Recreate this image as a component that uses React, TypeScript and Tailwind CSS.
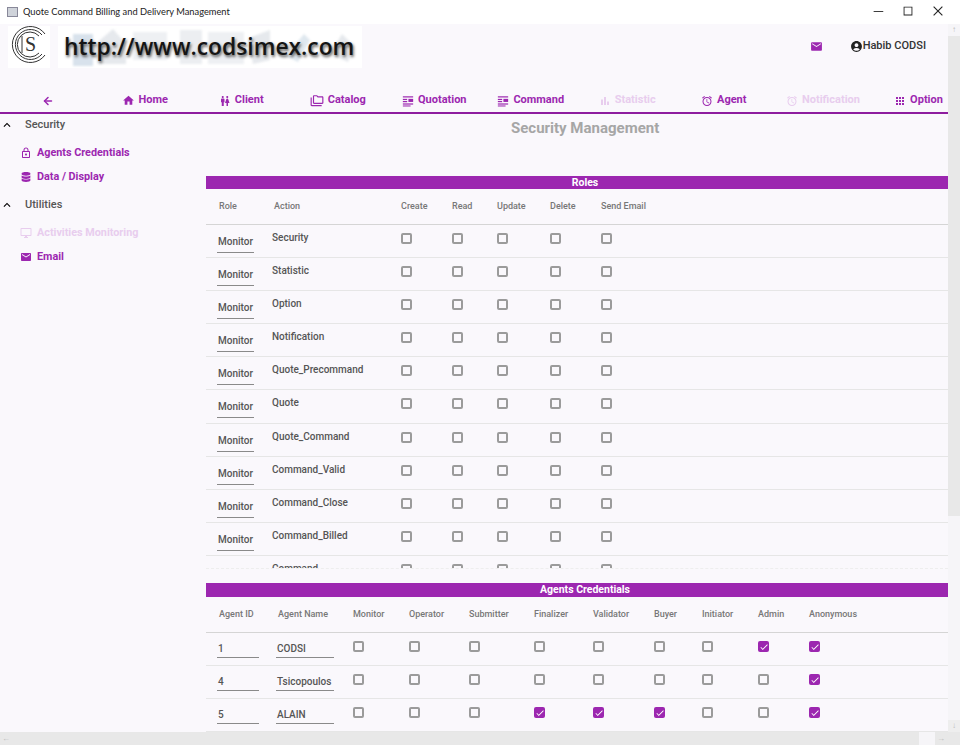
import React from 'react';
import {
  MdHome, MdWc, MdOutlineFolderCopy, MdOutlineBarChart, MdOutlineAlarm, MdApps, MdEmail,
  MdAccountCircle, MdOutlineLock, MdOutlineDesktopWindows, MdExpandLess, MdCheck,
} from 'react-icons/md';
import { FaDatabase } from 'react-icons/fa';
import { VscChromeMinimize, VscChromeMaximize, VscChromeClose } from 'react-icons/vsc';
import { ArrowLeft } from 'lucide-react';

const ListIcon = ({ className }: { className?: string }) => (
  <svg viewBox="0 0 14 14" className={className} fill="currentColor">
    <rect x="1" y="1.5" width="12" height="1.4" />
    <rect x="1" y="4.5" width="5" height="1.4" />
    <rect x="7.5" y="4.5" width="5.5" height="3.6" />
    <rect x="1" y="7" width="5" height="1.4" />
    <rect x="1" y="9.8" width="12" height="1.4" />
    <rect x="1" y="12.2" width="9" height="1.2" />
  </svg>
);

const navItems = [
  { icon: MdHome, label: 'Home', size: 'h-[13px] w-[13px]' },
  { icon: MdWc, label: 'Client', size: 'h-3 w-3' },
  { icon: MdOutlineFolderCopy, label: 'Catalog', size: 'h-[14px] w-[14px]' },
  { icon: ListIcon, label: 'Quotation', size: 'h-3 w-3' },
  { icon: ListIcon, label: 'Command', size: 'h-3 w-3' },
  { icon: MdOutlineBarChart, label: 'Statistic', size: 'h-3 w-3', off: true },
  { icon: MdOutlineAlarm, label: 'Agent', size: 'h-3 w-3' },
  { icon: MdOutlineAlarm, label: 'Notification', size: 'h-3 w-3', off: true },
  { icon: MdApps, label: 'Option', size: 'h-3 w-3' },
];

const roleActions = [
  'Security', 'Statistic', 'Option', 'Notification', 'Quote_Precommand', 'Quote',
  'Quote_Command', 'Command_Valid', 'Command_Close', 'Command_Billed', 'Command',
];

const agents = [
  { id: '1', name: 'CODSI', checks: [7, 8] },
  { id: '4', name: 'Tsicopoulos', checks: [8] },
  { id: '5', name: 'ALAIN', checks: [3, 4, 5, 8] },
];

const agentCols = ['Monitor', 'Operator', 'Submitter', 'Finalizer', 'Validator', 'Buyer', 'Initiator', 'Admin', 'Anonymous'];

const Box = ({ checked }: { checked?: boolean }) =>
  checked ? (
    <span className="flex h-[11px] w-[11px] items-center justify-center rounded-[2px] bg-[#9c27b0] text-white">
      <MdCheck size={10} />
    </span>
  ) : (
    <span className="block h-[11px] w-[11px] rounded-[2px] border-2 border-[#9b9b9b]" />
  );

const SideItem = ({ icon: Icon, label, off, size = 12 }: { icon: React.ElementType; label: string; off?: boolean; size?: number }) => (
  <div className={`flex h-6 items-center gap-[5px] pl-[20px] text-[10.8px] font-bold ${off ? 'text-[#e8cdee]' : 'text-[#9c27b0]'}`}>
    <span className="flex w-3 justify-center"><Icon size={size} /></span>
    <span>{label}</span>
  </div>
);

const SideHead = ({ label }: { label: string }) => (
  <div className="flex h-6 items-center text-[11px] font-medium text-[#555]">
    <MdExpandLess size={14} className="text-black" />
    <span className="ml-[11px]">{label}</span>
  </div>
);

const ROLE_GRID = 'grid grid-cols-[55px_127px_51px_45px_53px_51px_1fr]';
const AGENT_GRID = 'grid grid-cols-[59px_75px_56px_60px_65px_59px_61px_48px_56px_51px_1fr]';

export default function App() {
  return (
    <div className="flex h-[745px] w-[960px] flex-col overflow-hidden bg-[#faf8fc] font-[Roboto,sans-serif]">
      {/* window title bar */}
      <div className="flex h-6 shrink-0 items-center bg-white pl-[7px] font-[Lato,sans-serif] text-[9.3px] text-[#222]">
        <span className="mr-[5px] h-[10px] w-[11px] border border-[#889] bg-[#cfd3da]" />
        <span>Quote Command Billing and Delivery Management</span>
        <div className="ml-auto mb-[2px] flex items-center gap-[16px] pr-[15px] text-[#222]">
          <VscChromeMinimize size={14} />
          <VscChromeMaximize size={14} />
          <VscChromeClose size={14} />
        </div>
      </div>

      <div className="flex min-h-0 flex-1">
        <div className="flex min-w-0 flex-1 flex-col overflow-hidden">
          {/* logo row */}
          <div className="flex h-[65px] shrink-0 items-start">
            <div className="ml-[8px] mt-[2px] h-[42px] w-[42px] bg-white">
              <svg viewBox="0 0 42 42" className="h-[42px] w-[42px]" fill="none" stroke="#333" strokeWidth="1">
                <path d="M37 8 A18 18 0 1 0 37 29" />
                <path d="M34 9 A15 15 0 1 0 34 28" />
                <path d="M31 10 A12.5 12.5 0 1 0 31 27" />
                <path d="M14 10 v17" />
                <text x="17" y="25" fontFamily="Liberation Serif, serif" fontSize="20" fill="#333" stroke="none">S</text>
              </svg>
            </div>
            <div className="relative ml-[8px] mt-[2px] flex h-[42px] w-[304px] items-center overflow-hidden bg-white pl-[6px]">
              <svg viewBox="0 0 304 42" className="absolute inset-0 h-full w-full blur-[1px]" fill="#e6e9ed">
                <rect x="15" y="8" width="20" height="32" fill="#d8e2ec" />
                <path d="M35 20 L55 3 L68 18 L68 38 L40 38 Z" />
                <rect x="75" y="6" width="34" height="28" fill="#eef0f3" />
                <rect x="122" y="4" width="22" height="34" fill="#eceef1" />
                <rect x="150" y="6" width="36" height="32" fill="#eef0f3" />
                <path d="M190 12 L212 4 L212 34 L195 38 Z" />
                <path d="M228 30 L246 8 L252 14 L240 36 Z" fill="#dfe8ef" />
                <path d="M272 28 L284 8 L296 20 L290 36 Z" />
              </svg>
              <span className="relative whitespace-nowrap font-['Open_Sans',sans-serif] text-[22.8px] font-semibold leading-none text-[#151515] [text-shadow:1px_2px_3px_#555]">
                http://www.codsimex.com
              </span>
            </div>
            <div className="ml-auto mt-[14px] flex items-center text-[11px] font-medium text-[#333]">
              <MdEmail size={13} className="text-[#9c27b0]" />
              <span className="ml-[27px] flex items-center">
                <MdAccountCircle size={13} className="text-[#222]" />
                Habib CODSI
              </span>
              <span className="w-[22px]" />
            </div>
          </div>

          {/* navigation */}
          <div className="h-[25px] shrink-0 border-b-[2px] border-[#8e1d9f]">
            <div className="grid w-[963px] grid-cols-[repeat(8,96.5px)_102px_89px] text-[11px] font-bold">
              <div className="flex h-[23px] items-center justify-center text-[#9c27b0]">
                <ArrowLeft size={12} strokeWidth={3} />
              </div>
              {navItems.map(({ icon: Icon, label, off, size }) => (
                <div
                  key={label}
                  className={`flex h-[23px] items-center justify-center gap-[4px] ${off ? 'text-[#e8cdee]' : 'text-[#9c27b0]'}`}
                >
                  <Icon className={size} />
                  <span>{label}</span>
                </div>
              ))}
            </div>
          </div>

          <div className="flex min-h-0 flex-1">
            {/* sidebar */}
            <aside className="-mt-px w-[206px] shrink-0">
              <SideHead label="Security" />
              <div className="mt-[4px] pb-[4px]">
                <SideItem icon={MdOutlineLock} label="Agents Credentials" />
                <SideItem icon={FaDatabase} label="Data / Display" size={10} />
              </div>
              <SideHead label="Utilities" />
              <div className="mt-[4px]">
                <SideItem icon={MdOutlineDesktopWindows} label="Activities Monitoring" off />
                <SideItem icon={MdEmail} label="Email" />
              </div>
            </aside>

            {/* main */}
            <main className="flex min-w-0 flex-1 flex-col">
              <h1 className="mt-[4px] h-[58px] shrink-0 pl-[305px] text-[15px] font-bold leading-[20px] text-[#a6a6a6]">
                Security Management
              </h1>

              <div className="flex h-[13px] shrink-0 items-center justify-center bg-[#9c27b0] pl-[16px] text-[10.5px] font-bold text-white">
                Roles
              </div>
              <div className={`${ROLE_GRID} h-[36px] shrink-0 items-center border-b-[1.5px] border-[#d5d5d5] pl-[13px] text-[9px] font-medium text-[#777]`}>
                <span>Role</span>
                <span>Action</span>
                <span>Create</span>
                <span>Read</span>
                <span>Update</span>
                <span>Delete</span>
                <span>Send Email</span>
              </div>
              <div className="h-[344px] shrink-0 overflow-hidden border-b border-dashed border-[#eee]">
                {roleActions.map((action) => (
                  <div key={action} className={`${ROLE_GRID} h-[33.1px] border-b border-[#e6e6e6] pl-[11px] text-[10px] font-medium text-[#555]`}>
                    <span className="mt-[10px] h-[18px] w-[37px] border-b border-[#8a8a8a] pl-[1px] leading-[14px]">Monitor</span>
                    <span className="mt-[6px] leading-[14px]">{action}</span>
                    {[0, 1, 2, 3, 4].map((i) => (
                      <span key={i} className="ml-[2px] mt-[8px]"><Box /></span>
                    ))}
                  </div>
                ))}
              </div>

              <div className="mt-[14px] flex h-[14px] shrink-0 items-center justify-center bg-[#9c27b0] pl-[16px] text-[10.5px] font-bold text-white">
                Agents Credentials
              </div>
              <div className={`${AGENT_GRID} h-[36px] shrink-0 items-center border-b-[1.5px] border-[#d5d5d5] pl-[13px] text-[9px] font-medium text-[#777]`}>
                <span>Agent ID</span>
                <span>Agent Name</span>
                {agentCols.map((c) => (
                  <span key={c}>{c}</span>
                ))}
              </div>
              <div className="min-h-0 flex-1 overflow-hidden">
                {agents.map((a) => (
                  <div key={a.id} className={`${AGENT_GRID} h-[33px] border-b border-[#e6e6e6] pl-[11px] text-[10px] font-medium text-[#555]`}>
                    <span className="mt-[7px] h-[18px] w-[42px] border-b border-[#8a8a8a] pl-[1px] leading-[18px]">{a.id}</span>
                    <span className="mt-[7px] h-[18px] w-[58px] border-b border-[#8a8a8a] pl-[1px] leading-[18px]">{a.name}</span>
                    {agentCols.map((c, i) => (
                      <span key={c} className="ml-[2px] mt-[8px]"><Box checked={a.checks.includes(i)} /></span>
                    ))}
                  </div>
                ))}
              </div>
            </main>
          </div>
        </div>

        {/* vertical scrollbar */}
        <div className="flex w-3 shrink-0 flex-col bg-[#f6f5f8] text-[#bbb]">
          <div className="flex h-3 items-center justify-center"><span className="text-[8px] leading-none">↑</span></div>
          <div className="h-[480px] bg-[#e8e8e8]" />
          <div className="mt-auto flex h-3 items-center justify-center bg-[#eeeeee]"><span className="text-[8px] leading-none">↓</span></div>
        </div>
      </div>

      {/* horizontal scrollbar */}
      <div className="flex h-[13px] shrink-0 items-center bg-[#e8e8e8] text-[#bbb]">
        <span className="w-3 text-center text-[8px] leading-none">←</span>
        <div className="ml-[907px] h-full w-4 bg-[#f6f5f8]" />
        <span className="w-3 text-center text-[8px] leading-none">→</span>
      </div>
    </div>
  );
}
